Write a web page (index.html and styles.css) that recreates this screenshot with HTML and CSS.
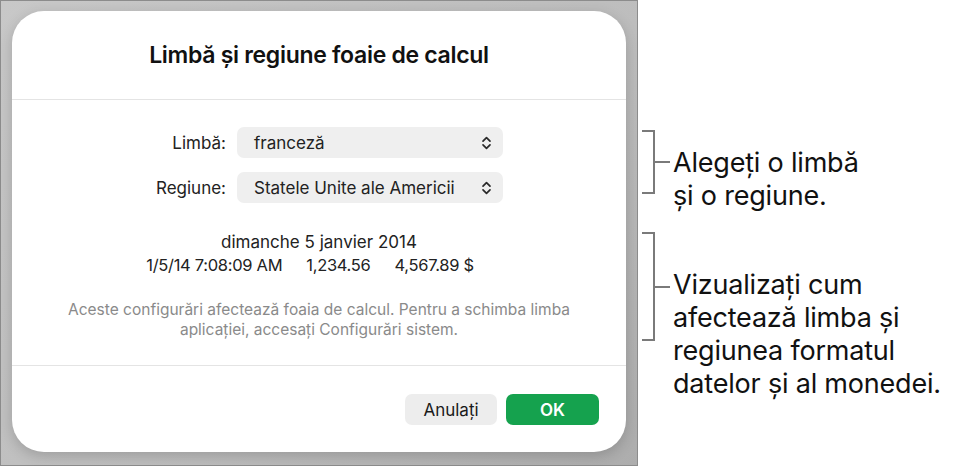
FILE: index.html
```html
<!DOCTYPE html>
<html lang="ro">
<head>
    <meta charset="UTF-8">
    <title>Limbă și regiune foaie de calcul</title>
    <link rel="stylesheet" href="styles.css">
</head>
<body>
    <div class="page">
        <div class="backdrop">
            <div class="dialog">
                <h1 class="dialog-title">Limbă și regiune foaie de calcul</h1>

                <div class="dialog-body">
                    <div class="form-grid">
                        <label class="form-label">Limbă:</label>
                        <div class="select">
                            <span>franceză</span>
                            <svg class="chevron" width="11" height="16" viewBox="0 0 11 16">
                                <path d="M2 6.2 L5.5 2.7 L9 6.2 M2 9.8 L5.5 13.3 L9 9.8" fill="none" stroke="#2a2a2a" stroke-width="1.7" stroke-linecap="round" stroke-linejoin="round"/>
                            </svg>
                        </div>

                        <label class="form-label">Regiune:</label>
                        <div class="select">
                            <span>Statele Unite ale Americii</span>
                            <svg class="chevron" width="11" height="16" viewBox="0 0 11 16">
                                <path d="M2 6.2 L5.5 2.7 L9 6.2 M2 9.8 L5.5 13.3 L9 9.8" fill="none" stroke="#2a2a2a" stroke-width="1.7" stroke-linecap="round" stroke-linejoin="round"/>
                            </svg>
                        </div>
                    </div>

                    <div class="preview">
                        <div>dimanche 5 janvier 2014</div>
                        <div class="preview-row">
                            <span>1/5/14 7:08:09 AM</span>
                            <span>1,234.56</span>
                            <span>4,567.89 $</span>
                        </div>
                    </div>

                    <p class="note">
                        Aceste configurări afectează foaia de calcul. Pentru a schimba limba<br>
                        aplicației, accesați Configurări sistem.
                    </p>
                </div>

                <div class="dialog-footer">
                    <button class="btn btn-cancel">Anulați</button>
                    <button class="btn btn-ok">OK</button>
                </div>
            </div>
        </div>

        <div class="callouts">
            <div class="callout callout-lang">
                <div class="bracket"></div>
                <div class="callout-text">Alegeți o limbă<br>și o regiune.</div>
            </div>
            <div class="callout callout-preview">
                <div class="bracket"></div>
                <div class="callout-text">Vizualizați cum<br>afectează limba și<br>regiunea formatul<br>datelor și al monedei.</div>
            </div>
        </div>
    </div>
</body>
</html>
```

FILE: styles.css
```css
/* Общие стили */
* {
    margin: 0;
    padding: 0;
    box-sizing: border-box;
    font-family: Inter, "Noto Sans", sans-serif;
}

body {
    background: white;
    width: 958px;
    height: 466px;
    overflow: hidden;
}

.page {
    display: flex;
    height: 466px;
}

/* Серый фон за диалогом */
.backdrop {
    width: 638px;
    height: 466px;
    flex-shrink: 0;
    background: linear-gradient(135deg, #c8c8c8 0%, #bdbdbd 60%, #adadad 100%);
    border: 1px solid #8c8c8c;
    padding: 10px 11px 0 11px;
}

.dialog {
    width: 614px;
    height: 441px;
    background: white;
    border-radius: 32px;
    box-shadow: 0 4px 14px rgba(0, 0, 0, 0.18);
    display: flex;
    flex-direction: column;
}

.dialog-title {
    height: 89px;
    display: flex;
    align-items: center;
    justify-content: center;
    font-size: 23px;
    font-weight: 600;
    color: #111;
    border-bottom: 1px solid #e4e4e4;
    letter-spacing: -0.3px;
}

.dialog-body {
    flex: 1;
    padding-top: 27px;
    border-bottom: 1px solid #e4e4e4;
}

/* Поля выбора */
.form-grid {
    display: grid;
    grid-template-columns: 214px 266px;
    column-gap: 11px;
    row-gap: 14px;
    align-items: center;
}

.form-label {
    text-align: right;
    font-size: 17px;
    color: #222;
}

.select {
    height: 31px;
    background: #efefef;
    border-radius: 7px;
    display: flex;
    align-items: center;
    justify-content: space-between;
    padding: 0 11px 0 17px;
    font-size: 17px;
    color: #222;
}

/* Пример формата */
.preview {
    margin-top: 28px;
    text-align: center;
    font-size: 17px;
    line-height: 23px;
    color: #222;
}

.preview-row {
    display: flex;
    justify-content: center;
    gap: 24px;
    padding-right: 18px;
    font-size: 16.5px;
    letter-spacing: -0.3px;
}

.note {
    margin-top: 23px;
    text-align: center;
    font-size: 15.5px;
    line-height: 20px;
    color: #8a8a8a;
}

/* Кнопки */
.dialog-footer {
    height: 86px;
    display: flex;
    justify-content: flex-end;
    align-items: flex-start;
    gap: 9px;
    padding: 28px 27px 0 0;
}

.btn {
    height: 31px;
    border: none;
    border-radius: 7px;
    font-size: 17px;
    cursor: pointer;
}

.btn-cancel {
    width: 92px;
    background: #ededed;
    color: #1a1a1a;
}

.btn-ok {
    width: 93px;
    background: #15a24e;
    color: white;
    font-weight: 600;
}

/* Подписи справа */
.callouts {
    padding-left: 4px;
    padding-top: 130px;
}

.callout {
    display: flex;
    align-items: flex-start;
}

.bracket {
    width: 13px;
    border: 2px solid #7a7a7a;
    border-left: none;
    position: relative;
    flex-shrink: 0;
}

.bracket::after {
    content: "";
    position: absolute;
    left: 11px;
    top: 50%;
    width: 17px;
    height: 2px;
    margin-top: -1px;
    background: #7a7a7a;
}

.callout-text {
    padding-left: 18px;
    font-size: 27px;
    line-height: 33px;
    color: #111;
    letter-spacing: -0.2px;
}

.callout-lang {
    height: 102px;
}

.callout-lang .bracket {
    height: 64px;
}

.callout-lang .callout-text {
    margin-top: 16px;
}

.callout-preview .bracket {
    height: 109px;
}

.callout-preview .callout-text {
    margin-top: 36px;
}
```
